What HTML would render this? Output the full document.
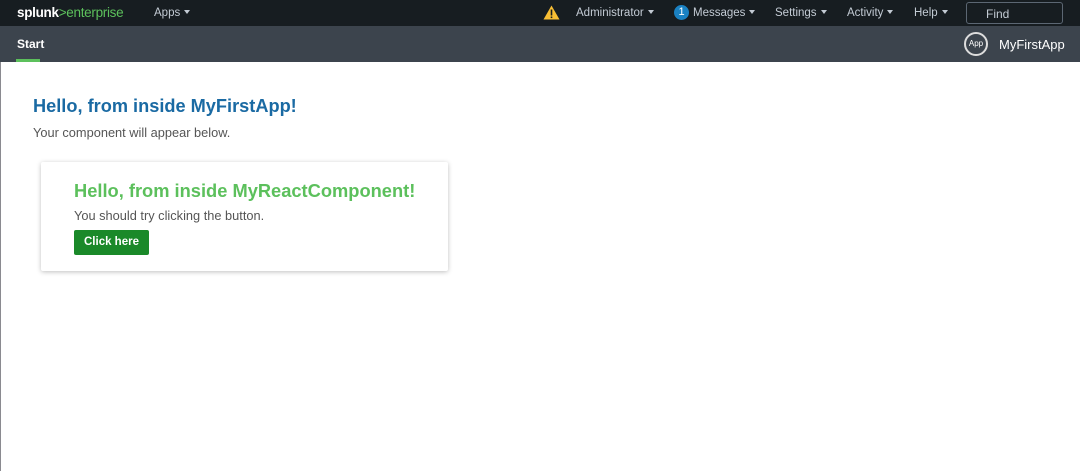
<!DOCTYPE html>
<html><head><meta charset="utf-8"><style>
*{margin:0;padding:0;box-sizing:border-box}
body{width:1080px;height:471px;overflow:hidden;font-family:"Liberation Sans",sans-serif;background:#fff;position:relative}
.top{position:absolute;left:0;top:0;width:1080px;height:26px;background:#171d21;color:#c3cbd4;font-size:11.5px}
.top span{position:absolute;top:7px;white-space:nowrap}
.car{display:inline-block;width:0;height:0;border-left:3px solid transparent;border-right:3px solid transparent;border-top:4px solid #c3cbd4;margin-left:4px;vertical-align:2px}
.app{position:absolute;left:0;top:26px;width:1080px;height:36px;background:#3c444d;color:#fff}
.body{position:absolute;left:0;top:62px;width:1080px;height:409px;border-left:1px solid #8a8a90}
</style></head><body>
<div class="top">
<span style="left:17px;top:5px;font-size:13.5px;font-weight:bold;color:#fff;letter-spacing:-0.3px">splunk<span style="position:static;color:#5cc05c;font-weight:normal">&gt;enterprise</span></span>
<span style="left:154px">Apps<i class="car"></i></span>
<svg style="position:absolute;left:543px;top:5px" width="17" height="15" viewBox="0 0 17 15"><path d="M8.5 0.5L16.5 14.5H0.5Z" fill="#f8be34"/><rect x="7.7" y="4.5" width="1.6" height="6" fill="#171d21"/><rect x="7.7" y="11.5" width="1.6" height="1.6" fill="#171d21"/></svg>
<span style="left:576px">Administrator<i class="car"></i></span>
<span style="left:674px;top:5px;width:15px;height:15px;border-radius:50%;background:#1a81c2;color:#fff;font-size:11px;text-align:center;line-height:15px">1</span>
<span style="left:693px">Messages<i class="car"></i></span>
<span style="left:775px">Settings<i class="car"></i></span>
<span style="left:847px">Activity<i class="car"></i></span>
<span style="left:914px">Help<i class="car"></i></span>
<div style="position:absolute;left:966px;top:2px;width:97px;height:22px;border:1px solid #5c6773;border-radius:3px;color:#c3cbd4;font-size:12px;padding:4px 0 0 19px">Find</div>
</div>
<div class="app">
<span style="position:absolute;left:17px;top:11px;font-size:12px;font-weight:bold">Start</span>
<div style="position:absolute;left:16px;top:33px;width:24px;height:3px;background:#5cc05c"></div>
<div style="position:absolute;left:964px;top:6px;width:24px;height:24px;border:2px solid #ddd;border-radius:50%;font-size:8px;text-align:center;line-height:20px">App</div>
<span style="position:absolute;left:999px;top:11px;font-size:13px">MyFirstApp</span>
</div>
<div class="body">
<div style="position:absolute;left:32px;top:34px;font-size:18.2px;font-weight:bold;color:#1a6aa3">Hello, from inside MyFirstApp!</div>
<div style="position:absolute;left:32px;top:63px;font-size:12.8px;color:#555">Your component will appear below.</div>
<div style="position:absolute;left:40px;top:100px;width:407px;height:109px;background:#fff;box-shadow:0 1px 5px rgba(0,0,0,0.25);border-radius:2px">
<div style="position:absolute;left:33px;top:18px;font-size:18.3px;font-weight:bold;color:#5cc05c;white-space:nowrap">Hello, from inside MyReactComponent!</div>
<div style="position:absolute;left:33px;top:46px;font-size:12.8px;color:#555">You should try clicking the button.</div>
<div style="position:absolute;left:33px;top:68px;width:75px;height:25px;background:#1a8929;border-radius:2px;color:#fff;font-size:11.5px;font-weight:bold;text-align:center;line-height:25px">Click here</div>
</div>
</div>
</body></html>
